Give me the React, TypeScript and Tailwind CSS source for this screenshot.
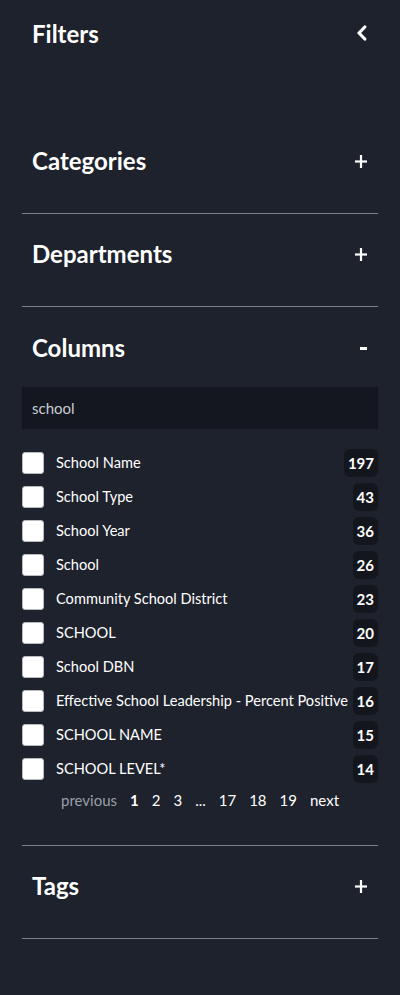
import React from "react";

const rows = [
  { label: "School Name", count: 197 },
  { label: "School Type", count: 43 },
  { label: "School Year", count: 36 },
  { label: "School", count: 26 },
  { label: "Community School District", count: 23 },
  { label: "SCHOOL", count: 20 },
  { label: "School DBN", count: 17 },
  { label: "Effective School Leadership - Percent Positive", count: 16 },
  { label: "SCHOOL NAME", count: 15 },
  { label: "SCHOOL LEVEL*", count: 14 },
];

const pages = ["1", "2", "3", "...", "17", "18", "19"];

function SectionHeader({ title, sign }: { title: string; sign: "+" | "-" }) {
  return (
    <div className="flex items-center justify-between px-[10px] h-8">
      <h2 className="text-[24px] font-bold text-white leading-8">{title}</h2>
      {sign === "+" ? (
        <svg viewBox="0 0 12 13" className="w-[12px] h-[13px] mr-[1px]" stroke="white" strokeWidth="2.2">
          <path d="M0 6.5 H12" />
          <path d="M6 0 V13" />
        </svg>
      ) : (
        <span className="w-[7px] h-[3px] bg-white mr-[1px]" />
      )}
    </div>
  );
}

function CollapsedSection({ title }: { title: string }) {
  return (
    <section className="pt-[24px] pb-[36px] border-b border-[#7d808a]">
      <SectionHeader title={title} sign="+" />
    </section>
  );
}

export default function App() {
  return (
    <div
      className="min-h-[995px] w-[400px] bg-[#1e222c] px-[22px] text-white"
      style={{ fontFamily: "Lato, 'Noto Sans', sans-serif" }}
    >
      {/* Header */}
      <div className="flex justify-between px-[10px] pt-[18px] h-[121px] items-start">
        <h1 className="text-[24px] font-bold leading-8">Filters</h1>
        <svg
          viewBox="0 0 10 16"
          className="w-[10px] h-[16px] mt-[7px] mr-[1px]"
          fill="none"
          stroke="white"
          strokeWidth="3.2"
          strokeLinecap="round"
          strokeLinejoin="round"
        >
          <path d="M7.8 2 L2 8 L7.8 14" />
        </svg>
      </div>

      <CollapsedSection title="Categories" />
      <CollapsedSection title="Departments" />

      {/* Columns */}
      <section className="pt-[25px] pb-[35px] border-b border-[#7d808a]">
        <SectionHeader title="Columns" sign="-" />
        <div className="mt-[23px] h-[42px] bg-[#14171f] flex items-center px-[10px] text-[15px] text-[#c9cdd4]">
          school
        </div>
        <ul className="mt-[20px] flex flex-col gap-[6px]">
          {rows.map((r) => (
            <li key={r.label} className="flex items-center h-[28px]">
              <span className="w-[22px] h-[22px] rounded-[3px] bg-white border border-[#b8bbc2] shrink-0" />
              <span className="ml-[12px] text-[14.6px] text-white flex-1 whitespace-nowrap">
                {r.label}
              </span>
              <span className="h-[28px] min-w-[22px] px-[4px] rounded-[6px] bg-[#13161d] text-[15px] font-bold flex items-center justify-center">
                {r.count}
              </span>
            </li>
          ))}
        </ul>
        <div className="mt-[7px] h-[20px] flex items-center justify-center text-[15px] gap-[13px]">
          <span className="text-[#9a9ea8]">previous</span>
          {pages.map((p) => (
            <span key={p} className={p === "1" ? "font-bold text-white" : "text-white"}>
              {p}
            </span>
          ))}
          <span className="text-white">next</span>
        </div>
      </section>

      <CollapsedSection title="Tags" />
    </div>
  );
}
